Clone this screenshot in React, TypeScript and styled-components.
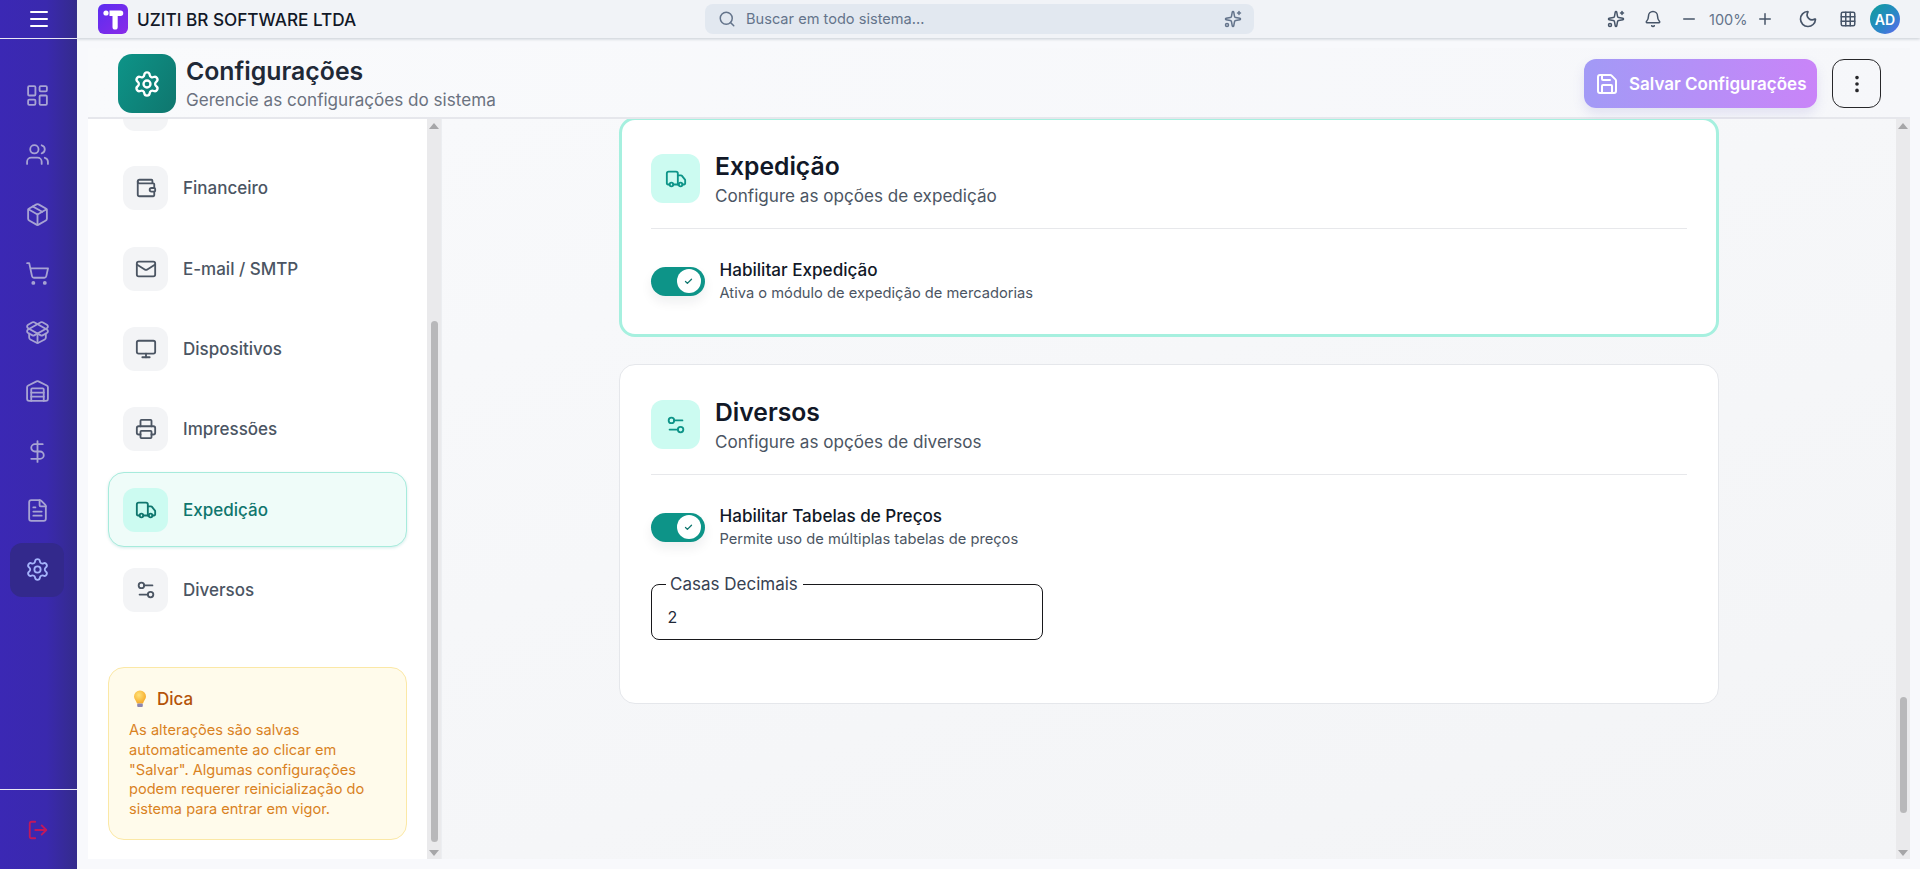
import styled, { createGlobalStyle } from "styled-components";
import {
  Bell,
  Check,
  DollarSign,
  EllipsisVertical,
  FileText,
  Grid3x3,
  LayoutDashboard,
  LogOut,
  Mail,
  Menu,
  Minus,
  Monitor,
  Moon,
  Package,
  PackageOpen,
  Plus,
  Printer,
  Save,
  Search,
  Settings,
  Settings2,
  ShoppingCart,
  Sparkles,
  Truck,
  Users,
  Wallet,
  Warehouse,
} from "lucide-react";

const GlobalStyles = createGlobalStyle`
  html, body {
    margin: 0;
    height: 100%;
    overflow: hidden;
    background: #f8f9fc;
    font-family: Inter, "Liberation Sans", sans-serif;
  }
  * {
    box-sizing: border-box;
  }
`;

const Shell = styled.div`
  display: flex;
  height: 869px;
`;

const Sidebar = styled.aside`
  width: 77px;
  flex-shrink: 0;
  display: flex;
  flex-direction: column;
  background: linear-gradient(90deg, #3b28b4 0%, #3a29ae 60%, #342b8c 100%);
`;

const SidebarTop = styled.div`
  height: 39px;
  display: flex;
  align-items: center;
  justify-content: center;
  border-bottom: 1px solid #e8e8f4;
  color: #fff;
`;

const SidebarNav = styled.nav`
  flex: 1;
  padding: 29.5px 3px 0 0;
  display: flex;
  flex-direction: column;
  align-items: center;
`;

const SidebarItem = styled.div<{ $active?: boolean }>`
  width: 54px;
  height: 54px;
  margin-bottom: 5.25px;
  border-radius: 12px;
  display: flex;
  align-items: center;
  justify-content: center;
  color: ${(p) => (p.$active ? "#a5b4fc" : "#a7a3d3")};
  background: ${(p) => (p.$active ? "#33298c" : "transparent")};
`;

const SidebarBottom = styled.div`
  height: 80px;
  padding: 29px 2px 0 0;
  display: flex;
  justify-content: center;
  border-top: 1px solid #e8e8f4;
  color: #c2185b;
`;

const Main = styled.div`
  flex: 1;
  min-width: 0;
  display: flex;
  flex-direction: column;
`;

const TopBar = styled.header`
  height: 38px;
  flex-shrink: 0;
  padding: 0 20px 0 21px;
  display: grid;
  grid-template-columns: 607px 549px 1fr;
  align-items: center;
  background: #f1f3f7;
  box-shadow: 0 1px 3px rgba(71, 85, 105, 0.28);
  position: relative;
  z-index: 2;
`;

const Brand = styled.div`
  display: flex;
  align-items: center;
  gap: 9px;
`;

const LogoMark = styled.svg`
  width: 30px;
  height: 30px;
  display: block;
`;

const BrandName = styled.span`
  font-size: 17.2px;
  font-weight: 500;
  color: #111827;
  white-space: nowrap;
`;

const SearchBox = styled.div`
  height: 30px;
  padding: 0 12px 0 13px;
  display: flex;
  align-items: center;
  gap: 10px;
  border-radius: 8px;
  background: #e2e8f0;
  color: #64748b;
  font-size: 14.6px;
`;

const SearchText = styled.span`
  flex: 1;
`;

const TopActions = styled.div`
  display: flex;
  align-items: center;
  justify-content: flex-end;
  color: #475569;
`;

const TopIcon = styled.span<{ $gap: number }>`
  display: flex;
  margin-right: ${(p) => p.$gap}px;
`;

const Zoom = styled.span`
  font-size: 14.5px;
  color: #64748b;
  margin: 0 9px 0 11px;
  width: 38px;
  text-align: center;
`;

const Avatar = styled.div`
  width: 30px;
  height: 30px;
  border-radius: 50%;
  display: flex;
  align-items: center;
  justify-content: center;
  background: linear-gradient(135deg, #0d9f9a 0%, #2b86c9 60%, #6366f1 100%);
  color: #fff;
  font-size: 14px;
  font-weight: 600;
`;

const Workspace = styled.div`
  flex: 1;
  min-height: 0;
  padding: 10px 10px 10px 11px;
  display: flex;
  flex-direction: column;
`;

const PageHeader = styled.div`
  height: 71px;
  flex-shrink: 0;
  padding: 2px 29px 0 30px;
  display: flex;
  align-items: center;
  gap: 10px;
  background: linear-gradient(100deg, #f9fafc 0%, #f6f7fa 100%);
  border-bottom: 2px solid #e6e7ec;
`;

const HeaderTile = styled.div`
  width: 58px;
  height: 59px;
  border-radius: 14px;
  display: flex;
  align-items: center;
  justify-content: center;
  background: linear-gradient(120deg, #0d9488 0%, #0f766e 100%);
  color: #fff;
`;

const HeaderText = styled.div`
  flex: 1;
`;

const PageTitle = styled.h1`
  margin: 0;
  font-size: 24.8px;
  line-height: 32px;
  font-weight: 600;
  color: #1f2937;
`;

const PageSub = styled.p`
  margin: 1px 0 0;
  font-size: 17.1px;
  line-height: 24px;
  color: #6b7280;
`;

const SaveButton = styled.button`
  width: 233px;
  height: 49px;
  margin-right: 5px;
  border: 0;
  padding: 0 0 0 11px;
  display: flex;
  align-items: center;
  gap: 10px;
  border-radius: 12px;
  background: linear-gradient(90deg, #a29af6 0%, #c984f8 100%);
  box-shadow: 0 6px 12px rgba(120, 110, 200, 0.16);
  color: #fff;
  font-family: inherit;
  font-size: 17px;
  font-weight: 600;
  white-space: nowrap;
`;

const MoreButton = styled.button`
  width: 49px;
  height: 49px;
  padding: 0;
  display: flex;
  align-items: center;
  justify-content: center;
  border: 1px solid #27272a;
  border-radius: 12px;
  background: transparent;
  color: #27272a;
`;

const Body = styled.div`
  flex: 1;
  min-height: 0;
  display: flex;
`;

const Panel = styled.div`
  width: 339px;
  flex-shrink: 0;
  padding: 0 20px 19px;
  display: flex;
  flex-direction: column;
  overflow: hidden;
  background: #fff;
`;

const NavStub = styled.div`
  width: 45px;
  height: 12px;
  margin-left: 15px;
  margin-bottom: 20px;
  border-radius: 0 0 12px 12px;
  background: #f3f4f6;
`;

const NavList = styled.div`
  display: flex;
  flex-direction: column;
  gap: 5.3px;
`;

const NavItem = styled.div<{ $active?: boolean }>`
  height: 75px;
  padding: 0 14px;
  display: flex;
  align-items: center;
  gap: 15px;
  border-radius: 16px;
  border: 1px solid ${(p) => (p.$active ? "#a7ebdc" : "transparent")};
  background: ${(p) => (p.$active ? "#effcf9" : "transparent")};
  box-shadow: ${(p) => (p.$active ? "0 1px 3px rgba(13, 148, 136, 0.18)" : "none")};
  color: ${(p) => (p.$active ? "#0f766e" : "#4b5563")};
  font-size: 17px;
  font-weight: 500;
`;

const NavTile = styled.span<{ $active?: boolean }>`
  width: 45px;
  height: 44px;
  flex-shrink: 0;
  display: flex;
  align-items: center;
  justify-content: center;
  border-radius: 12px;
  background: ${(p) => (p.$active ? "#ccfbf1" : "#f3f4f6")};
`;

const Tip = styled.div`
  margin-top: 40px;
  height: 174px;
  padding: 20px 20px 0;
  border-radius: 16px;
  border: 1px solid #fbe8a6;
  background: #fffbeb;
`;

const TipTitle = styled.div`
  display: flex;
  align-items: center;
  gap: 10px;
  padding-left: 4px;
  font-size: 17px;
  font-weight: 500;
  line-height: 22px;
  color: #b45309;
  margin-bottom: 11px;
`;

const TipText = styled.p`
  margin: 0;
  font-size: 14.6px;
  line-height: 19.6px;
  color: #d9821f;
`;

const ScrollTrack = styled.div`
  width: 14px;
  flex-shrink: 0;
  padding: 4px 3px 3px;
  display: flex;
  flex-direction: column;
  align-items: center;
  background: #eaeaec;
`;

const Arrow = styled.span<{ $down?: boolean }>`
  width: 0;
  height: 0;
  border-left: 5px solid transparent;
  border-right: 5px solid transparent;
  ${(p) => (p.$down ? "border-top: 6px solid #a6a6a8;" : "border-bottom: 6px solid #a6a6a8;")}
`;

const Thumb = styled.span<{ $top: number; $height: number }>`
  width: 7px;
  height: ${(p) => p.$height}px;
  margin-top: ${(p) => p.$top}px;
  margin-bottom: auto;
  border-radius: 4px;
  background: #b8b8ba;
`;

const Content = styled.div`
  flex: 1;
  min-width: 0;
  display: flex;
  align-items: stretch;
  background: linear-gradient(160deg, #f8f9fb 0%, #f3f4f6 100%);
  overflow: hidden;
  border-left: 1px solid #eceef1;
`;

const ContentInner = styled.div`
  flex: 1;
  min-width: 0;
  padding: 0 177px;
  display: flex;
  flex-direction: column;
  gap: 27px;
  margin-top: -2px;
`;

const Card = styled.section<{ $active?: boolean }>`
  padding: ${(p) => (p.$active ? "32px 29px 30px" : "33px 31px 63px")};
  border-radius: 16px;
  background: #fff;
  border: ${(p) => (p.$active ? "3px solid #a6f0df" : "1px solid #e5e7eb")};
`;

const CardHead = styled.div`
  display: flex;
  align-items: flex-start;
  gap: 15px;
  padding-bottom: 19.5px;
  margin-bottom: 29.5px;
  border-bottom: 1px solid #e7e8eb;
`;

const CardTile = styled.span`
  width: 49px;
  height: 49px;
  margin-top: 2px;
  flex-shrink: 0;
  display: flex;
  align-items: center;
  justify-content: center;
  border-radius: 12px;
  background: #ccfbf1;
  color: #0d9488;
`;

const CardTitle = styled.h2`
  margin: 0;
  font-size: 24.7px;
  line-height: 28px;
  font-weight: 600;
  color: #111827;
`;

const CardSub = styled.p`
  margin: 4px 0 0;
  font-size: 17.1px;
  line-height: 24px;
  color: #4b5563;
`;

const ToggleRow = styled.div`
  display: flex;
  align-items: center;
  gap: 14.5px;
`;

const Toggle = styled.span`
  width: 54px;
  height: 29px;
  flex-shrink: 0;
  padding: 2.5px 4.5px;
  display: flex;
  justify-content: flex-end;
  border-radius: 15px;
  background: #0d9488;
  box-shadow: 0 6px 12px rgba(15, 23, 42, 0.07);
`;

const Knob = styled.span`
  width: 24px;
  height: 24px;
  display: flex;
  align-items: center;
  justify-content: center;
  border-radius: 50%;
  background: #fff;
  color: #0f766e;
`;

const ToggleTitle = styled.div`
  font-size: 17.1px;
  line-height: 24px;
  font-weight: 500;
  color: #111827;
`;

const ToggleSub = styled.div`
  margin-top: 1px;
  font-size: 14.7px;
  line-height: 21px;
  color: #4b5563;
`;

const Field = styled.fieldset`
  width: 392px;
  height: 67px;
  margin: 23px 0 0;
  padding: 0 0 0 15.5px;
  border: 1px solid #18181b;
  border-radius: 8px;
`;

const FieldLegend = styled.legend`
  margin-left: -1.5px;
  padding: 0 5px 0 4px;
  font-size: 17px;
  line-height: 22px;
  color: #374151;
`;

const FieldValue = styled.div`
  margin-top: 9.5px;
  font-size: 16px;
  line-height: 24px;
  color: #1f2937;
`;

const navItems = [
  { label: "Financeiro", icon: Wallet },
  { label: "E-mail / SMTP", icon: Mail },
  { label: "Dispositivos", icon: Monitor },
  { label: "Impressões", icon: Printer },
  { label: "Expedição", icon: Truck, active: true },
  { label: "Diversos", icon: Settings2 },
];

const sideItems = [
  { icon: LayoutDashboard },
  { icon: Users },
  { icon: Package },
  { icon: ShoppingCart },
  { icon: PackageOpen },
  { icon: Warehouse },
  { icon: DollarSign },
  { icon: FileText },
  { icon: Settings, active: true },
];

function Logo() {
  return (
    <LogoMark viewBox="0 0 30 30">
      <defs>
        <linearGradient id="logoFill" x1="0" x2="1" y1="0" y2="1">
          <stop offset="0" stopColor="#5b2df0" />
          <stop offset="1" stopColor="#8a2be8" />
        </linearGradient>
      </defs>
      <rect width="30" height="30" rx="6" fill="url(#logoFill)" />
      <circle cx="8" cy="9" r="2.6" fill="#fff" />
      <path d="M11.5 6.5h11a2 2 0 0 1 0 5.5h-2.8v11a2.6 2.6 0 0 1-5.2 0V12h-3z" fill="#fff" />
    </LogoMark>
  );
}

function Bulb() {
  return (
    <svg width="14" height="18" viewBox="0 0 14 18">
      <defs>
        <radialGradient id="bulbFill" cx="0.4" cy="0.35" r="0.7">
          <stop offset="0" stopColor="#ffe27a" />
          <stop offset="1" stopColor="#f5a623" />
        </radialGradient>
      </defs>
      <path d="M7 0.5a6 6 0 0 1 6 6c0 2.6-2.2 3.8-3 7H4c-.8-3.200-3-4.400-3-7a6 6 0 0 1 6-6z" fill="url(#bulbFill)" />
      <rect x="4.200" y="13.500" width="5.600" height="3.500" rx="1" fill="#8d86b0" />
    </svg>
  );
}

export default function App() {
  return (
    <Shell>
      <GlobalStyles />
      <Sidebar>
        <SidebarTop>
          <Menu size={24} />
        </SidebarTop>
        <SidebarNav>
          {sideItems.map(({ icon: Icon, active }, i) => (
            <SidebarItem key={i} $active={active}>
              <Icon size={25} strokeWidth={1.75} />
            </SidebarItem>
          ))}
        </SidebarNav>
        <SidebarBottom>
          <LogOut size={22} />
        </SidebarBottom>
      </Sidebar>
      <Main>
        <TopBar>
          <Brand>
            <Logo />
            <BrandName>UZITI BR SOFTWARE LTDA</BrandName>
          </Brand>
          <SearchBox>
            <Search size={18} />
            <SearchText>Buscar em todo sistema...</SearchText>
            <Sparkles size={18} />
          </SearchBox>
          <TopActions>
            <TopIcon $gap={19}><Sparkles size={18} /></TopIcon>
            <TopIcon $gap={18.5}><Bell size={18} /></TopIcon>
            <Minus size={18} />
            <Zoom>100%</Zoom>
            <TopIcon $gap={24}><Plus size={18} /></TopIcon>
            <TopIcon $gap={21}><Moon size={20} /></TopIcon>
            <TopIcon $gap={13}><Grid3x3 size={18} /></TopIcon>
            <Avatar>AD</Avatar>
          </TopActions>
        </TopBar>
        <Workspace>
          <PageHeader>
            <HeaderTile>
              <Settings size={28} />
            </HeaderTile>
            <HeaderText>
              <PageTitle>Configurações</PageTitle>
              <PageSub>Gerencie as configurações do sistema</PageSub>
            </HeaderText>
            <SaveButton>
              <Save size={24} />
              Salvar Configurações
            </SaveButton>
            <MoreButton>
              <EllipsisVertical size={22} />
            </MoreButton>
          </PageHeader>
          <Body>
            <Panel>
              <NavStub />
              <NavList>
                {navItems.map(({ label, icon: Icon, active }) => (
                  <NavItem key={label} $active={active}>
                    <NavTile $active={active}>
                      <Icon size={22} />
                    </NavTile>
                    {label}
                  </NavItem>
                ))}
              </NavList>
              <Tip>
                <TipTitle>
                  <Bulb />
                  Dica
                </TipTitle>
                <TipText>
                  As alterações são salvas automaticamente ao clicar em "Salvar". Algumas
                  configurações podem requerer reinicialização do sistema para entrar em vigor.
                </TipText>
              </Tip>
            </Panel>
            <ScrollTrack>
              <Arrow />
              <Thumb $top={192} $height={521} />
              <Arrow $down />
            </ScrollTrack>
            <Content>
              <ContentInner>
                <Card $active>
                  <CardHead>
                    <CardTile>
                      <Truck size={22} />
                    </CardTile>
                    <div>
                      <CardTitle>Expedição</CardTitle>
                      <CardSub>Configure as opções de expedição</CardSub>
                    </div>
                  </CardHead>
                  <ToggleRow>
                    <Toggle>
                      <Knob>
                        <Check size={9} strokeWidth={3.5} />
                      </Knob>
                    </Toggle>
                    <div>
                      <ToggleTitle>Habilitar Expedição</ToggleTitle>
                      <ToggleSub>Ativa o módulo de expedição de mercadorias</ToggleSub>
                    </div>
                  </ToggleRow>
                </Card>
                <Card>
                  <CardHead>
                    <CardTile>
                      <Settings2 size={22} />
                    </CardTile>
                    <div>
                      <CardTitle>Diversos</CardTitle>
                      <CardSub>Configure as opções de diversos</CardSub>
                    </div>
                  </CardHead>
                  <ToggleRow>
                    <Toggle>
                      <Knob>
                        <Check size={9} strokeWidth={3.5} />
                      </Knob>
                    </Toggle>
                    <div>
                      <ToggleTitle>Habilitar Tabelas de Preços</ToggleTitle>
                      <ToggleSub>Permite uso de múltiplas tabelas de preços</ToggleSub>
                    </div>
                  </ToggleRow>
                  <Field>
                    <FieldLegend>Casas Decimais</FieldLegend>
                    <FieldValue>2</FieldValue>
                  </Field>
                </Card>
              </ContentInner>
              <ScrollTrack>
                <Arrow />
                <Thumb $top={568} $height={116} />
                <Arrow $down />
              </ScrollTrack>
            </Content>
          </Body>
        </Workspace>
      </Main>
    </Shell>
  );
}
